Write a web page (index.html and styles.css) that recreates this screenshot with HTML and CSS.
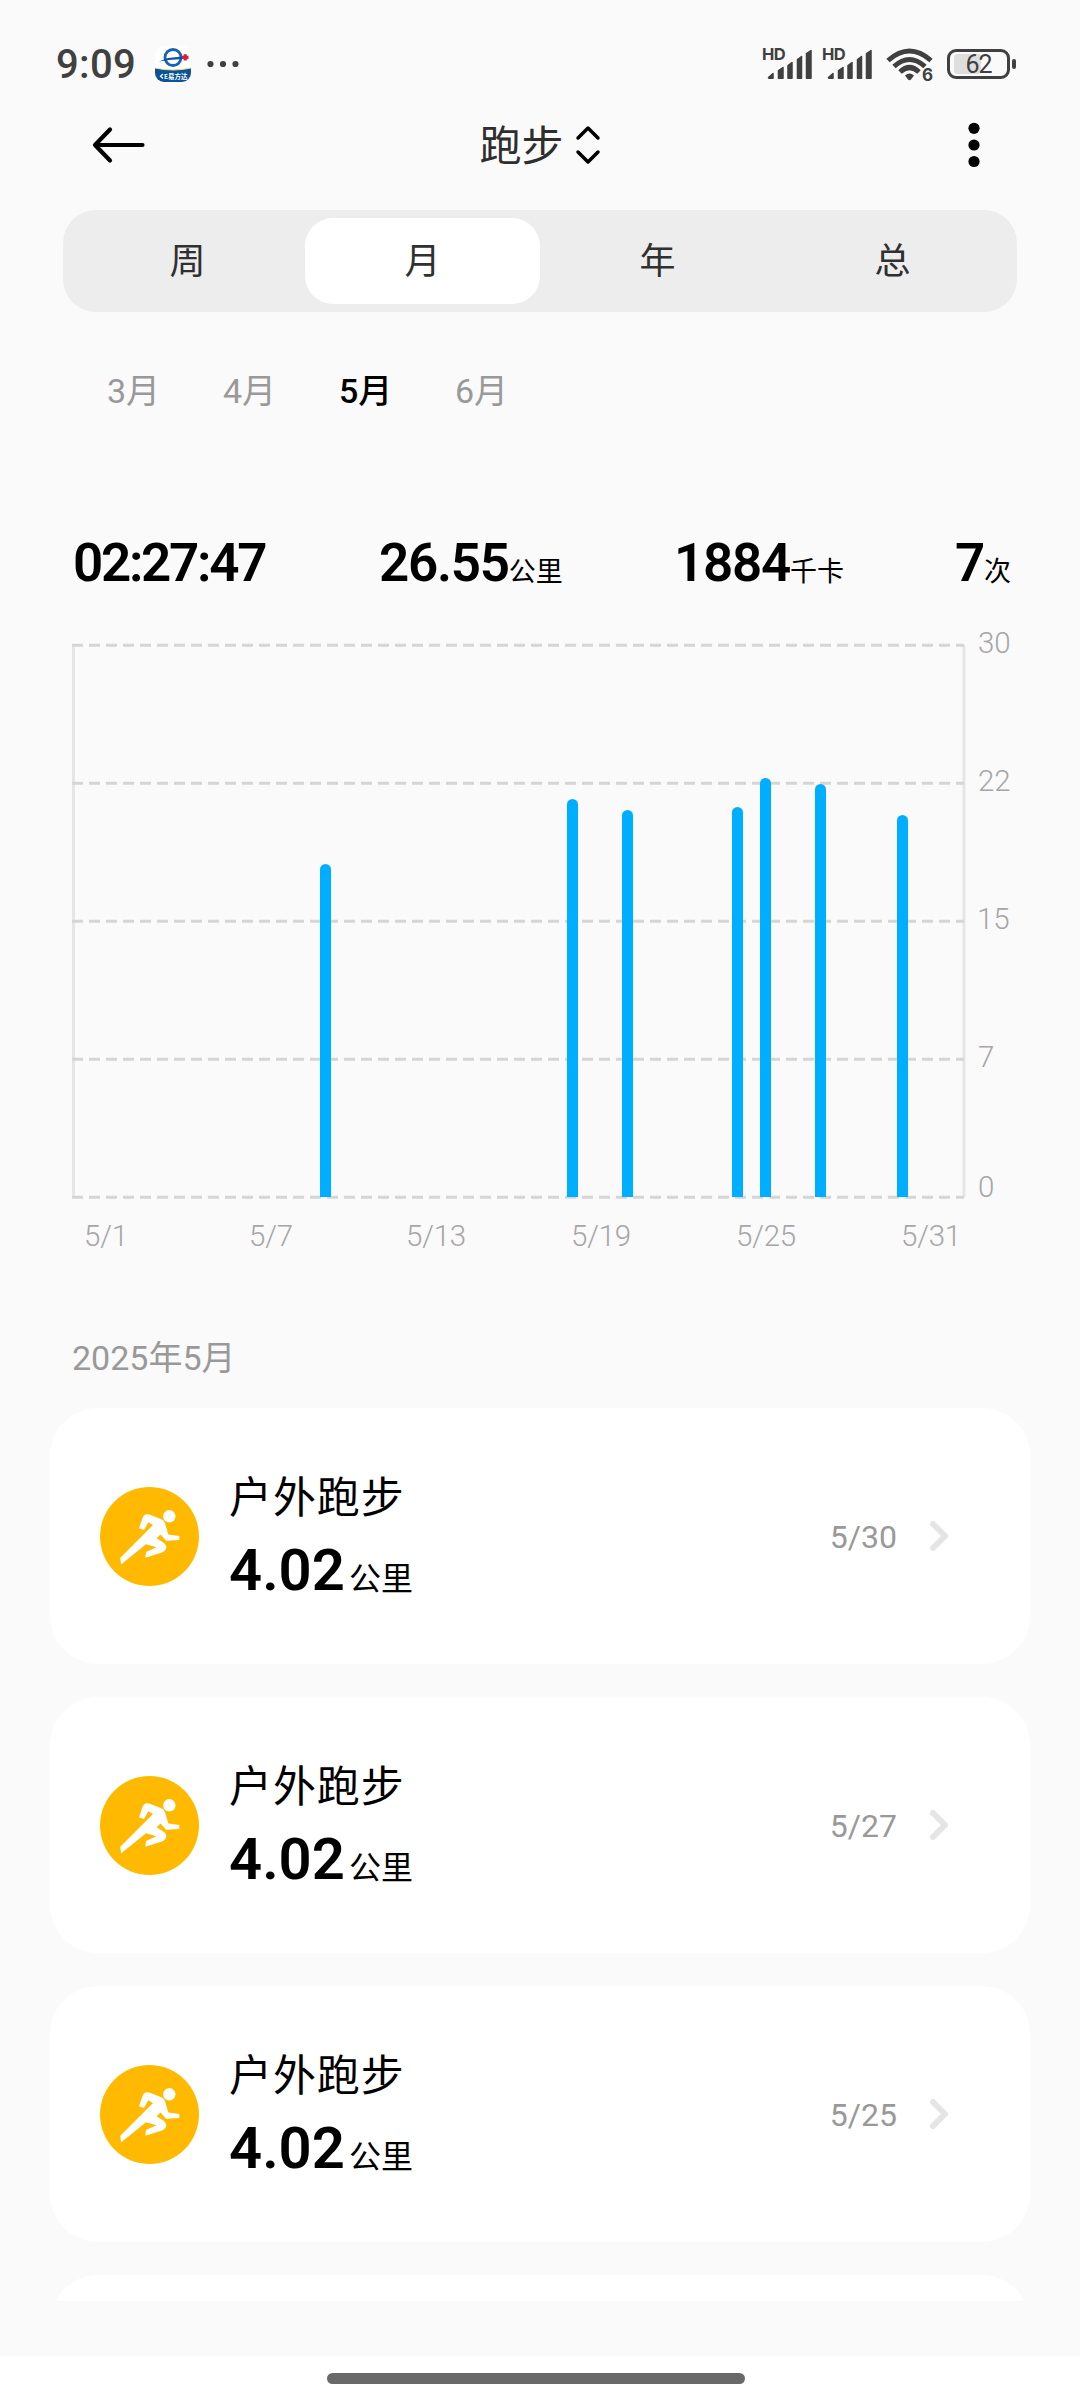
FILE: index.html
```html
<!DOCTYPE html>
<html lang="zh-CN">
<head>
<meta charset="utf-8">
<title>跑步</title>
<link rel="stylesheet" href="styles.css">
</head>
<body>
<svg width="0" height="0" class="defs">
  <symbol id="runner" viewBox="0 0 99 99">
    <circle cx="49.5" cy="49.5" r="49.5" fill="#ffba00"/>
    <circle cx="69.3" cy="29.3" r="6.2" fill="#fff"/>
    <path fill="#fff" d="M46 27.300Q48 27 50 27.800L60.700 32Q64 33 65 36L68.300 47.500L79.300 49V53L66 53.700L60.500 47.500L56.700 51.300L64 56Q66.500 58 66.300 60.500Q66 63.500 62 65.500L45.300 70.700L46 65L56.500 60.300L46 57.300L21 77.500L20.300 70.700L53 38L48.300 35.300L44 43L39 41.300L42.500 31Q43.500 28 46 27.300Z"/>
  </symbol>
  <symbol id="chevron" viewBox="0 0 18 30">
    <path d="M3 3L15 15L3 27" fill="none" stroke="#e5e5e5" stroke-width="6" stroke-linecap="round" stroke-linejoin="round"/>
  </symbol>
  <symbol id="signal" viewBox="0 0 52 34">
    <path fill="#404040" stroke="#404040" stroke-width="1.500" stroke-linejoin="round" d="M6.500 30.500L11 26.500V31.200H7ZM16.500 23.500L21 20.500V31.200H16.500ZM26 18.500L30 15.500V31.200H26ZM35.500 12.500L39.500 9.500V31.200H35.500ZM44.500 6.500L49 3.500V31.200H44.500Z"/>
  </symbol>
</svg>
<div class="screen">
  <header class="status">
    <span class="clock">9:09</span>
    <svg class="app-badge" width="36" height="36" viewBox="0 0 36 36">
      <defs><clipPath id="badge"><rect width="36" height="36" rx="9"/></clipPath></defs>
      <g clip-path="url(#badge)">
        <rect width="36" height="36" fill="#fff"/>
        <path d="M0 22Q18 26 36 22V36H0Z" fill="#0b5296"/>
        <path d="M0 22Q18 26 36 22" fill="none" stroke="#f0d98a" stroke-width="1"/>
        <circle cx="18" cy="11.500" r="8" fill="none" stroke="#1463b8" stroke-width="2.800"/>
        <path d="M4 15.500L13 12L27 10.500L28 13L14 14Z" fill="#0f4fa8"/>
        <path d="M27 11.300H33.500M30.200 8.200V14.400" stroke="#d8203c" stroke-width="3.200"/>
        <path d="M8 28L5.500 30.300L8 32.500" fill="none" stroke="#fff" stroke-width="1.200"/>
        <text x="9" y="32.700" class="badge-text">E易方达</text>
      </g>
    </svg>
    <svg class="more-notes" width="32" height="8" viewBox="0 0 32 8" fill="#404040"><circle cx="3.500" cy="4" r="3.100"/><circle cx="16" cy="4" r="3.100"/><circle cx="28.500" cy="4" r="3.100"/></svg>
    <div class="status-right">
      <svg class="cell" width="52" height="34" viewBox="0 0 52 34"><use href="#signal"/><text x="0" y="13" class="hd">HD</text></svg>
      <svg class="cell" width="52" height="34" viewBox="0 0 52 34"><use href="#signal"/><text x="0" y="13" class="hd">HD</text></svg>
      <svg class="wifi" width="48" height="36" viewBox="0 0 48 36">
        <g fill="none" stroke="#404040" stroke-width="5"><path d="M2 13.500Q23.500-5.500 45 13.500"/><path d="M8 19.500Q23.500 5.500 39 19.500"/><path d="M14 25Q23.500 16 33 25"/></g>
        <path d="M19 28.500Q23.500 24.500 28 28.500L25 32.500Q23.500 34 22 32.500Z" fill="#404040"/>
        <text x="36" y="34" class="wifi-gen">6</text>
      </svg>
      <svg class="battery" width="70" height="30" viewBox="0 0 70 30">
        <rect x="7" y="5" width="27" height="20" rx="3" fill="#dedede"/>
        <rect x="1.500" y="1.500" width="60" height="27" rx="7.500" fill="none" stroke="#404040" stroke-width="3"/>
        <rect x="65" y="10" width="4" height="10" rx="2" fill="#404040"/>
        <text x="31.500" y="24" class="level">62</text>
      </svg>
    </div>
  </header>

  <nav class="titlebar">
    <svg width="54" height="40" viewBox="0 0 54 40" fill="none" stroke="#000" stroke-width="4.200" stroke-linecap="round" stroke-linejoin="round"><path d="M18 4.500L3 20L18 35.500M3 20H50.500"/></svg>
    <h1 class="title"><span>跑步</span>
      <svg width="26" height="40" viewBox="0 0 26 40" fill="none" stroke="#000" stroke-width="3.500" stroke-linecap="round" stroke-linejoin="round"><path d="M3 13L13 3L23 13M3 27L13 37L23 27"/></svg>
    </h1>
    <svg width="54" height="46" viewBox="0 0 54 46"><circle cx="40" cy="6.300" r="5.600"/><circle cx="40" cy="23" r="5.600"/><circle cx="40" cy="39.500" r="5.600"/></svg>
  </nav>

  <div class="segments">
    <span class="segment">周</span><span class="segment active">月</span><span class="segment">年</span><span class="segment">总</span>
  </div>

  <div class="months">
    <span>3月</span><span>4月</span><span class="current">5月</span><span>6月</span>
  </div>

  <div class="stats">
    <div class="stat time">02:27:47</div>
    <div class="stat distance">26.55<small>公里</small></div>
    <div class="stat energy">1884<small>千卡</small></div>
    <div class="stat count">7<small>次</small></div>
  </div>

  <svg class="chart" width="1080" height="640" viewBox="0 620 1080 640">
    <path d="M73.500 645V1197M964 645V1197" stroke="#e6e6e6" stroke-width="3"/>
    <path d="M72 645.200H964M72 783.200H964M72 921.200H964M72 1059.200H964M72 1197.200H964" stroke="#d5d5d5" stroke-width="3" stroke-dasharray="11 6"/>
    <g fill="#00aeff">
      <path d="M320 1197V869.500a5.500 5.500 0 0 1 11 0V1197Z"/>
      <path d="M567 1197V804.500a5.500 5.500 0 0 1 11 0V1197Z"/>
      <path d="M622 1197V815.500a5.500 5.500 0 0 1 11 0V1197Z"/>
      <path d="M732 1197V812.500a5.500 5.500 0 0 1 11 0V1197Z"/>
      <path d="M760 1197V783.500a5.500 5.500 0 0 1 11 0V1197Z"/>
      <path d="M815 1197V789.500a5.500 5.500 0 0 1 11 0V1197Z"/>
      <path d="M897 1197V820.500a5.500 5.500 0 0 1 11 0V1197Z"/>
    </g>
    <g class="axis">
      <text x="978" y="653">30</text><text x="978" y="791">22</text><text x="977" y="929">15</text><text x="978" y="1067">7</text><text x="978" y="1197">0</text>
    </g>
    <g class="axis dates">
      <text x="106" y="1246">5/1</text><text x="271" y="1246">5/7</text><text x="436" y="1246">5/13</text><text x="601" y="1246">5/19</text><text x="766" y="1246">5/25</text><text x="931" y="1246">5/31</text>
    </g>
  </svg>

  <h2 class="group">2025年5月</h2>
  <main class="list">
    <article class="card">
      <svg class="sport" width="99" height="99"><use href="#runner"/></svg>
      <div class="info"><div class="name">户外跑步</div><div class="dist">4.02<small>公里</small></div></div>
      <span class="date">5/30</span><svg width="18" height="30"><use href="#chevron"/></svg>
    </article>
    <article class="card">
      <svg class="sport" width="99" height="99"><use href="#runner"/></svg>
      <div class="info"><div class="name">户外跑步</div><div class="dist">4.02<small>公里</small></div></div>
      <span class="date">5/27</span><svg width="18" height="30"><use href="#chevron"/></svg>
    </article>
    <article class="card">
      <svg class="sport" width="99" height="99"><use href="#runner"/></svg>
      <div class="info"><div class="name">户外跑步</div><div class="dist">4.02<small>公里</small></div></div>
      <span class="date">5/25</span><svg width="18" height="30"><use href="#chevron"/></svg>
    </article>
    <article class="card"></article>
  </main>
  <footer class="gesture"><div class="pill"></div></footer>
</div>
</body>
</html>
```
FILE: styles.css
```css
* { box-sizing: border-box; margin: 0; padding: 0; }
body {
  width: 1080px;
  background: #fafafa;
  font-family: Roboto, "Noto Sans CJK SC", sans-serif;
  color: #000;
}
svg { display: block; flex: none; }
.defs { position: absolute; }
.screen { width: 1080px; height: 2400px; display: flex; flex-direction: column; overflow: hidden; }

.status { height: 100px; display: flex; align-items: flex-start; padding: 46px 63px 0 56px; }
.clock { width: 99px; font-size: 40px; font-weight: 500; line-height: 38px; letter-spacing: .3px; color: #404040; }
.more-notes { margin: 14px 0 0 16px; }
.status-right { margin-left: auto; display: flex; align-items: flex-start; gap: 8px; padding-top: 1px; }
.cell, .wifi { overflow: visible; }
.wifi { margin-left: 4px; }
.battery { margin: 2px 0 0 5px; }
.hd { font: 700 16.500px Inter, sans-serif; fill: #404040; letter-spacing: -.5px; }
.wifi-gen { font: 700 17px Inter, sans-serif; fill: #404040; }
.level { font: 400 25px Roboto, sans-serif; fill: #404040; text-anchor: middle; letter-spacing: -1px; }
.badge-text { font: 700 6.500px "Noto Sans CJK SC", sans-serif; fill: #fff; }

.titlebar { height: 90px; display: flex; align-items: center; justify-content: space-between; padding: 0 92px; }
.title { display: flex; align-items: center; gap: 11px; font-size: 42px; font-weight: 400; line-height: 60px; color: #2e2e2e; }
.title span { padding-top: 3px; }

.segments { height: 102px; margin: 20px 63px 0; padding: 8px 7px; display: flex; background: #ededed; border-radius: 33px; }
.segment { flex: 1; height: 86px; text-align: center; font-size: 36px; line-height: 89px; color: #303030; border-radius: 28px; }
.active { background: #fff; }

.months { height: 60px; margin-top: 49px; padding-left: 107px; display: flex; font-size: 34px; line-height: 61px; color: #999; }
.months span { width: 116px; }
.months .current { color: #000; font-weight: 500; }

.stats { height: 80px; margin-top: 101px; padding-left: 73px; display: grid; grid-template-columns: 306px 295px 281px auto; }
.stat { font-size: 53px; font-weight: 600; line-height: 82px; letter-spacing: -1.3px; white-space: nowrap; }
.time { letter-spacing: -2.300px; }
.stat small { font-size: 27px; font-weight: 400; letter-spacing: 0; }

.chart { margin-top: 18px; }
.axis text { font: 300 29.500px Roboto, sans-serif; fill: #a6a6a6; letter-spacing: -.2px; }
.dates text { text-anchor: middle; }

.group { height: 60px; margin-top: 68px; padding-left: 72px; font-size: 34px; font-weight: 400; line-height: 60px; color: #999; }
.list { height: 893px; margin-top: 20px; padding: 0 50px; overflow: hidden; display: flex; flex-direction: column; gap: 33px; }
.card { height: 256px; flex: none; display: flex; align-items: center; padding: 0 82px 0 50px; background: #fff; border-radius: 48px; }
.info { margin-left: 30px; flex: 1; padding-top: 4px; }
.name { font-size: 43px; line-height: 72px; letter-spacing: .9px; }
.dist { font-size: 58px; font-weight: 600; line-height: 72px; letter-spacing: 0; }
.dist small { font-size: 32px; font-weight: 400; letter-spacing: 0; margin-left: 4px; }
.date { font-size: 32px; color: #999; letter-spacing: 0; margin-right: 33px; padding-top: 1px; }

.gesture { height: 44px; margin-top: auto; flex: none; background: #fff; padding: 17px 0 0 327px; }
.pill { width: 418px; height: 11px; border-radius: 6px; background: #696969; }
```
